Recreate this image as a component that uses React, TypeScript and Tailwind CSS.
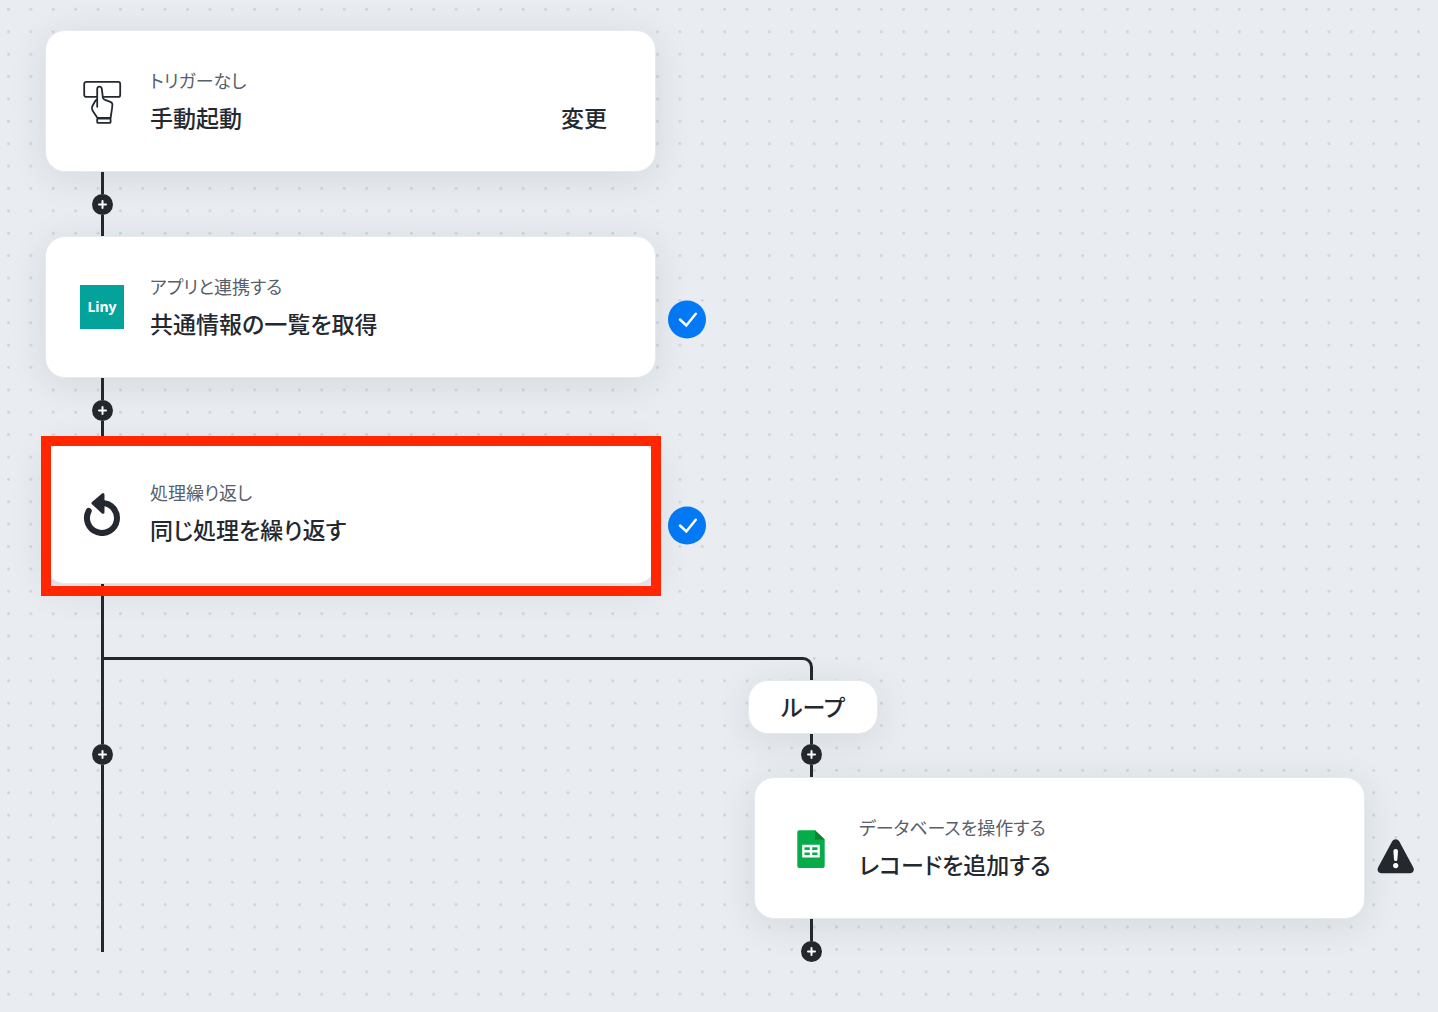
import type { ReactNode } from 'react';

type NodeCardProps = {
    icon: ReactNode;
    label: string;
    title: string;
    action?: string;
    status?: ReactNode;
    highlighted?: boolean;
};

function PressIcon() {
    return (
        <svg viewBox="0 0 44 46" className="w-11 h-[46px]" fill="none" stroke="#24292f" strokeWidth="1.8" strokeLinejoin="round" strokeLinecap="round" aria-hidden="true">
            <rect x="4.2" y="3.9" width="36" height="15" rx="2" />
            <path
                fill="#fff"
                d="M17.2 28.8V10.9c0-3 4-3.2 4.6-.2l1.1 9.2c.3 1.2 1 1.6 2.2 2l5.8 2.2c1.2.6 1.6 1.4 1.5 2.6l-.4 4-1.4 9.3H17.5l-5-7.5c-.9-1.6-.9-2.8-.2-4.3l3.1-5.5 1.8-1.6z"
            />
            <rect x="17.2" y="40.5" width="13.4" height="4.4" rx="1" />
        </svg>
    );
}

function LinyIcon() {
    return (
        <div className="w-11 h-11 bg-[#03a39b] text-white flex items-center justify-center font-['Noto_Sans',sans-serif] font-bold text-sm">
            Liny
        </div>
    );
}

function RepeatIcon() {
    return (
        <svg viewBox="0 0 44 46" className="w-11 h-[46px]" fill="none" aria-hidden="true">
            <path d="M22 13A15 15 0 1 1 8.7 21" stroke="#24292f" strokeWidth="6" strokeLinecap="round" />
            <path d="M13 13.2 23 4.7v17.6z" fill="#24292f" stroke="#24292f" strokeWidth="3" strokeLinejoin="round" />
        </svg>
    );
}

function SheetsIcon() {
    return (
        <svg viewBox="0 0 44 44" className="w-11 h-11" aria-hidden="true">
            <path d="M10.3 4.3H26l9.7 9.3v26.4a2 2 0 0 1-2 2H10.3a2 2 0 0 1-2-2V6.3a2 2 0 0 1 2-2z" fill="#05ac49" />
            <path d="M26 4.3l9.7 9.3H26z" fill="#078632" />
            <path
                fillRule="evenodd"
                fill="#fff"
                d="M13.2 18.8h17.6v12.6H13.2zM15.5 21.2v2.7h5.3v-2.7zM23.2 21.2v2.7h5.3v-2.7zM15.5 26.4v2.7h5.3v-2.7zM23.2 26.4v2.7h5.3v-2.7z"
            />
        </svg>
    );
}

function CheckStatus() {
    return (
        <svg viewBox="0 0 38 41" className="w-[38px] h-[41px]" role="img" aria-label="設定済み">
            <circle cx="19" cy="21.5" r="19" fill="#0479f5" />
            <path d="M12 21.5l6.3 6 9.5-11.8" fill="none" stroke="#fff" strokeWidth="2.5" strokeLinecap="round" />
        </svg>
    );
}

function WarningStatus() {
    return (
        <svg viewBox="0 0 38 40" className="w-[38px] h-10" role="img" aria-label="未設定">
            <path d="M15.2 2.2c1.7-2.7 5.3-2.7 7 0l14 26c1.7 3-.2 6-3.5 6h-28c-3.3 0-5.2-3-3.5-6z" fill="#24292f" />
            <path d="M16.4 12.2a2.3 2.3 0 0 1 4.6 0l-.6 8.2a1.7 1.7 0 0 1-3.4 0z" fill="#fff" />
            <circle cx="18.7" cy="26.6" r="2.6" fill="#fff" />
        </svg>
    );
}

function NodeCard({ icon, label, title, action, status, highlighted }: NodeCardProps) {
    return (
        <div className="flex items-start gap-3">
            <div className="relative">
                <div className="w-[611px] h-[142px] pl-[34px] pr-12 flex items-center gap-[26px] bg-white border border-[#e6e9ee] rounded-[20px] shadow-[0_6px_36px_rgba(30,42,42,0.10)]">
                    {icon}
                    <div className="flex-1">
                        <p className="text-[18px] leading-[26px] text-[#57606a]">{label}</p>
                        <div className="mt-1.5 flex items-center justify-between text-[23px] leading-[36px] font-medium">
                            <h2>{title}</h2>
                            {action && <button className="cursor-pointer">{action}</button>}
                        </div>
                    </div>
                </div>
                {highlighted && (
                    <div className="absolute -left-1 -right-[5px] -top-1.5 -bottom-3 border-[10px] border-[#ff2600] pointer-events-none" />
                )}
            </div>
            {status && <div className="pt-[62px]">{status}</div>}
        </div>
    );
}

function AddButton() {
    return (
        <button aria-label="追加" className="w-[21px] h-[21px] rounded-full bg-[#24292f] flex items-center justify-center cursor-pointer">
            <svg viewBox="0 0 9 9" className="w-[9px] h-[9px]" stroke="#fff" strokeWidth="2" strokeLinecap="round" aria-hidden="true">
                <path d="M4.5 1v7M1 4.5h7" />
            </svg>
        </button>
    );
}

function Connector() {
    return (
        <div className="ml-[47px] w-[21px] flex flex-col items-center">
            <div className="w-[3px] h-[22px] bg-[#24292f]" />
            <AddButton />
            <div className="w-[3px] h-[21px] bg-[#24292f]" />
        </div>
    );
}

function DotGrid() {
    return (
        <svg className="absolute inset-0 w-full h-full" aria-hidden="true">
            <defs>
                <pattern id="dots" x="-2.7" y="-1.7" width="22.38" height="22.38" patternUnits="userSpaceOnUse">
                    <circle cx="11.19" cy="11.19" r="1.4" fill="#cdd2d9" />
                </pattern>
            </defs>
            <rect width="100%" height="100%" fill="url(#dots)" />
        </svg>
    );
}

export default function App() {
    return (
        <main className="relative min-h-screen bg-[#e9edf2] text-[#24292f] font-['Noto_Sans_CJK_JP',sans-serif] [font-feature-settings:'palt']">
            <DotGrid />
            <div className="relative pt-[30px] pl-[45px]">
                <NodeCard icon={<PressIcon />} label="トリガーなし" title="手動起動" action="変更" />
                <Connector />
                <NodeCard icon={<LinyIcon />} label="アプリと連携する" title="共通情報の一覧を取得" status={<CheckStatus />} />
                <Connector />
                <NodeCard icon={<RepeatIcon />} label="処理繰り返し" title="同じ処理を繰り返す" status={<CheckStatus />} highlighted />

                <div className="flex items-start">
                    {/* main line */}
                    <div className="ml-[47px] w-[21px] flex flex-col items-center shrink-0">
                        <div className="w-[3px] h-[160px] bg-[#24292f]" />
                        <AddButton />
                        <div className="w-[3px] h-[187px] bg-[#24292f]" />
                    </div>

                    {/* loop branch */}
                    <div className="-ml-[9px] pt-[73px]">
                        <div className="w-[709px] h-[23px] border-t-[3px] border-r-[3px] border-[#24292f] rounded-tr-[10px]" />
                        <div className="ml-[644px]">
                            <div className="w-[130px] h-[54px] pb-0.5 flex items-center justify-center bg-white border border-[#e6e9ee] rounded-[20px] shadow-[0_6px_36px_rgba(30,42,42,0.10)] text-[23px] leading-[36px] font-medium">
                                ループ
                            </div>
                            <div className="ml-[6px]">
                                <div className="ml-[47px] w-[21px] flex flex-col items-center">
                                    <div className="w-[3px] h-[10px] bg-[#24292f]" />
                                    <AddButton />
                                    <div className="w-[3px] h-3 bg-[#24292f]" />
                                </div>
                                <NodeCard icon={<SheetsIcon />} label="データベースを操作する" title="レコードを追加する" status={<WarningStatus />} />
                                <div className="ml-[47px] w-[21px] flex flex-col items-center">
                                    <div className="w-[3px] h-[22px] bg-[#24292f]" />
                                    <AddButton />
                                </div>
                            </div>
                        </div>
                    </div>
                </div>
            </div>
        </main>
    );
}
